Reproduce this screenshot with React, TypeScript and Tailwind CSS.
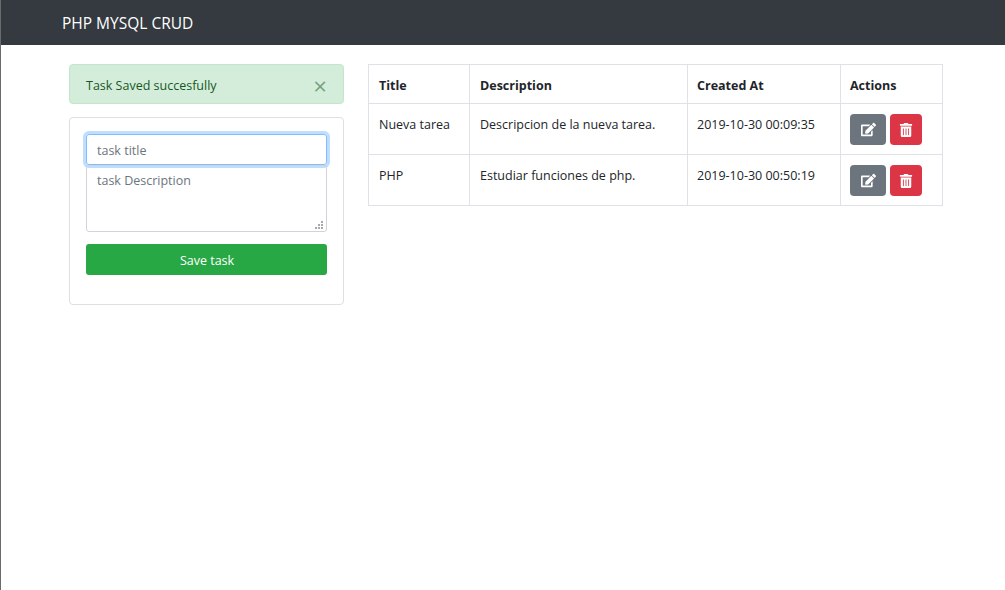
import { FaEdit, FaTrashAlt } from "react-icons/fa";

const tasks = [
  { title: "Nueva tarea", description: "Descripcion de la nueva tarea.", createdAt: "2019-10-30 00:09:35" },
  { title: "PHP", description: "Estudiar funciones de php.", createdAt: "2019-10-30 00:50:19" },
];

const font = "font-['Open_Sans','Noto_Sans',sans-serif]";

function ActionButtons() {
  return (
    <div className="flex gap-1">
      <button className="flex h-[31px] w-9 items-center justify-center rounded-[4px] bg-[#6c757d] text-white">
        <FaEdit size={15} />
      </button>
      <button className="flex h-[31px] w-8 items-center justify-center rounded-[4px] bg-[#dc3545] text-white">
        <FaTrashAlt size={14} />
      </button>
    </div>
  );
}

// dotted corner of the textarea
function ResizeGrip() {
  return (
    <svg width="8" height="8" viewBox="0 0 8 8" className="absolute right-[4px] bottom-[3px] text-[#a8a8a8]" fill="currentColor">
      <rect x="6" y="0" width="2" height="2" />
      <rect x="3" y="3" width="2" height="2" />
      <rect x="6" y="3" width="2" height="2" />
      <rect x="0" y="6" width="2" height="2" />
      <rect x="3" y="6" width="2" height="2" />
      <rect x="6" y="6" width="2" height="2" />
    </svg>
  );
}

export default function App() {
  return (
    <div className={`flex min-h-[590px] bg-white text-[12.5px] text-[#212529] ${font}`}>
      {/* window edge */}
      <div className="w-px shrink-0 bg-[#6b6b6b]" />

      <div className="flex-1">
        {/* Navbar */}
        <nav className="flex h-[45px] items-center bg-[#343a40] pt-[3px] pl-[61px] text-[15.5px] text-white">
          PHP MYSQL CRUD
        </nav>

        <div className="flex gap-6 pt-[19px] pl-[68px]">
          {/* Left column */}
          <div className="w-[275px]">
            <div className="flex h-10 items-center justify-between rounded-[4px] border border-[#c3e6cb] bg-[#d4edda] pt-1 pr-[16px] pl-4 text-[#155724]">
              <span>Task Saved succesfully</span>
              <span className="text-[24px] leading-none font-normal text-[#155724]/50">×</span>
            </div>

            <div className="mt-[13px] h-[188px] rounded-[4px] border border-[#dfdfdf] px-4 pt-4">
              <input
                placeholder="task title"
                className="block h-[31px] w-full rounded-[3px] border border-[#80bdff] px-2.5 pt-0.5 text-[#495057] shadow-[0_0_0_3px_rgba(0,123,255,0.25)] outline-none placeholder:text-[#6c757d]"
              />
              <div className="relative">
                <textarea
                  placeholder="task Description"
                  className="block h-[67px] w-full resize-none rounded-[3px] border border-[#ced4da] px-2.5 pt-[6px] outline-none placeholder:text-[#6c757d]"
                />
                <ResizeGrip />
              </div>
              <button className="mt-3 h-[31px] w-full rounded-[3px] bg-[#28a745] pt-1 pl-px text-white">Save task</button>
            </div>
          </div>

          {/* Tasks table */}
          <table className="h-fit w-[574px] table-fixed border-collapse">
            <colgroup>
              <col className="w-[101px]" />
              <col className="w-[218px]" />
              <col className="w-[153px]" />
              <col className="w-[102px]" />
            </colgroup>
            <thead>
              <tr className="h-[39px] text-left">
                <th className="border border-[#dee2e6] px-2.5 pt-1 font-bold">Title</th>
                <th className="border border-[#dee2e6] px-2.5 pt-1 font-bold">Description</th>
                <th className="border border-[#dee2e6] pt-1 pr-2.5 pl-[9px] font-bold">Created At</th>
                <th className="border border-[#dee2e6] pt-1 pr-2.5 pl-[9px] font-bold">Actions</th>
              </tr>
            </thead>
            <tbody>
              {tasks.map((task) => (
                <tr key={task.title} className="h-[51px]">
                  <td className="border border-[#dee2e6] px-2.5 pt-3 align-top">{task.title}</td>
                  <td className="border border-[#dee2e6] px-2.5 pt-3 align-top">{task.description}</td>
                  <td className="border border-[#dee2e6] pt-3 pr-2.5 pl-[9px] align-top">{task.createdAt}</td>
                  <td className="border border-[#dee2e6] pt-2.5 pr-2.5 pl-[9px] align-top">
                    <ActionButtons />
                  </td>
                </tr>
              ))}
            </tbody>
          </table>
        </div>
      </div>
    </div>
  );
}
